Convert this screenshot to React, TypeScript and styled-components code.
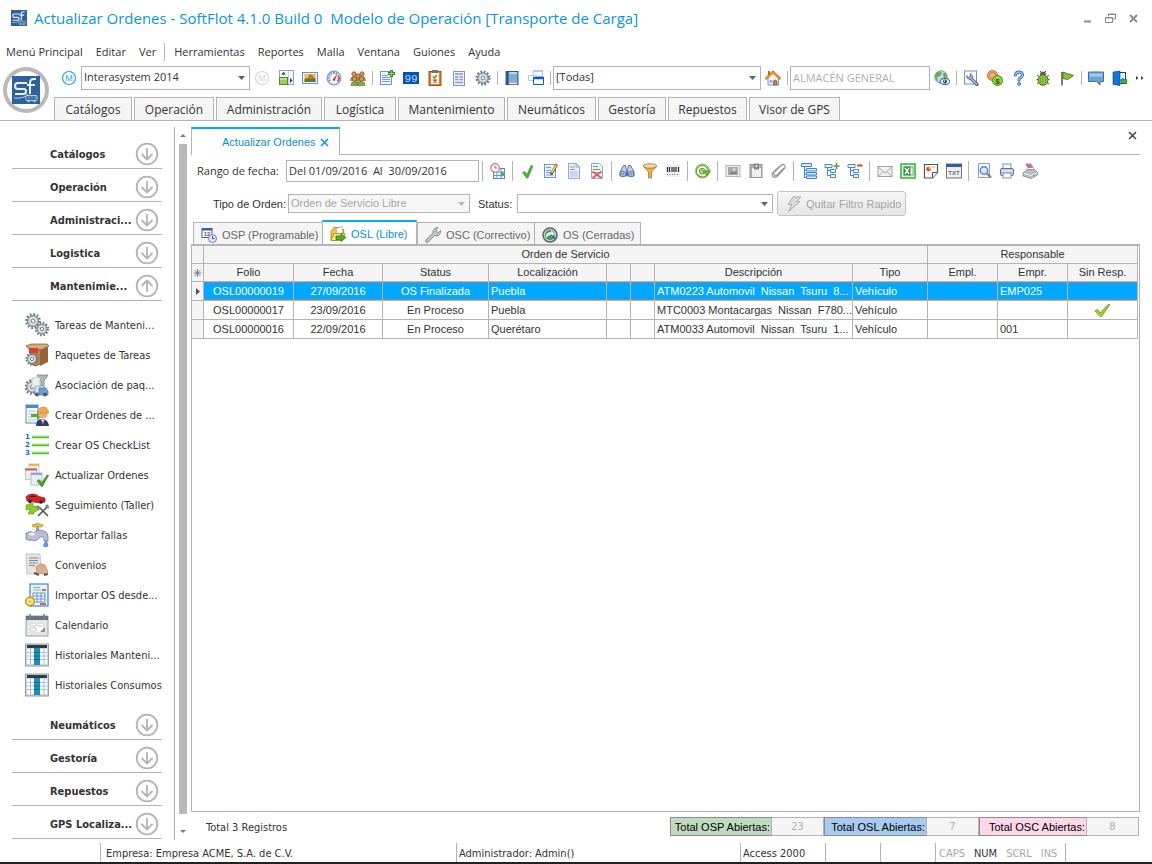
import React from "react";
import styled, { createGlobalStyle, css } from "styled-components";

const line = "#b4b4b4";
const accent = "#00a8ff";
const ink = "#333333";
const uiFont = '"Open Sans", "Segoe UI", sans-serif';
const sideFont = '"DejaVu Sans Condensed", Tahoma, sans-serif';
const gridFont = '"Liberation Sans", Arial, sans-serif';

const GlobalStyle = createGlobalStyle`
  *, *::before, *::after { box-sizing: border-box; }
  body { margin: 0; background: #fff; color: ${ink}; font-family: ${uiFont}; font-size: 11px; line-height: 16px; }
  button, input, select { font: inherit; color: inherit; margin: 0; padding: 0; border: 0; background: none; border-radius: 0; }
  svg { display: block; flex: none; }
`;

/* ---------- icon drawings ---------- */

const Page = ({ x = 3, y = 1, w = 11, h = 14, c = "#6f93cf" }) => (
  <rect x={x + 0.5} y={y + 0.5} width={w - 1} height={h - 1} fill="#eef4fd" stroke={c} />
);
const Gear = ({ cx, cy, r, fill = "#b9c0c4", stroke = "#6d777e" }: { cx: number; cy: number; r: number; fill?: string; stroke?: string }) => (
  <g>
    <circle cx={cx} cy={cy} r={r} fill="none" stroke={stroke} strokeWidth={r * 0.4} strokeDasharray={`${r * 0.26} ${r * 0.2635}`} />
    <circle cx={cx} cy={cy} r={r * 0.84} fill={fill} stroke={stroke} strokeWidth="0.8" />
    <circle cx={cx} cy={cy} r={r * 0.56} fill="#e9edee" />
    <circle cx={cx} cy={cy} r={r * 0.3} fill="#fff" stroke={stroke} strokeWidth="1" />
  </g>
);
const Tree = () => (
  <g fill="none" stroke="#3b87dd">
    <path d="M3.500 4v8.500H6M3.500 7.500H6" />
    <path d="M1 1.500h7v3H1zM6.500 6.500h5v3h-5zM6.500 11.500h5v3h-5z" fill="#fff" />
  </g>
);
const Person = ({ x, y, c }: { x: number; y: number; c: string }) => (
  <g>
    <circle cx={x} cy={y} r="2.200" fill="#d89a5a" stroke="#8a5220" strokeWidth="0.8" />
    <path d={`M${x - 3.5} ${y + 6.5}q0-4 3.500-4t3.500 4z`} fill={c} stroke="#5b4a20" strokeWidth="0.500" />
  </g>
);

const icons: Record<string, React.ReactNode> = {
  model: <g><circle cx="8" cy="8" r="6.500" fill="none" stroke="currentColor" strokeWidth="1.200" /><text x="8" y="11" textAnchor="middle" fontSize="9" fontFamily="Liberation Sans" fill="currentColor">M</text></g>,
  panels: <g><rect x="1.500" y="0.500" width="14" height="14" fill="#fafcff" stroke="#8ba4cd" /><path d="M10.500 1v13" stroke="#c2d0e8" /><path d="M3 4.500L5.500 2 8 4.500zM12 8l2.500 2.500L12 13z" fill="#2d3642" /><rect x="1.500" y="7.500" width="8" height="7" fill="#9bcb62" stroke="#4c8d25" /><path d="M2 9h7" stroke="#dff2c8" /></g>,
  photo: <g><rect x="0.500" y="2.500" width="15" height="11" fill="#e9f2ff" stroke="#6c91c9" /><rect x="2.500" y="4" width="11" height="8" fill="#f0b34c" /><path d="M2.500 12V9l3-1 3 1 2-2 3 2v3z" fill="#56802d" /><circle cx="8.500" cy="7" r="2.500" fill="#c27a24" /><circle cx="5" cy="6" r="1" fill="#fff0a0" /></g>,
  gauge: <g><circle cx="8" cy="8" r="6.800" fill="#eef3fa" stroke="#8aa1c6" strokeWidth="1.400" /><path d="M4 11a5 5 0 0 1 7-7" fill="none" stroke="#5e8fe0" strokeWidth="1.800" strokeDasharray="1.500 1" /><path d="M12 5.500a5 5 0 0 1-.5 6" fill="none" stroke="#d55" strokeWidth="2" /><path d="M11.500 3.500L8.500 11l-2-1z" fill="#c62626" /></g>,
  people: <g><Person x={8} y={6} c="#a8c468" /><Person x={4} y={4} c="#c9904d" /><Person x={12} y={4} c="#c9904d" /><Person x={4.5} y={9} c="#79b73f" /><Person x={11.5} y={9} c="#79b73f" /></g>,
  listAdd: <g><Page x={1} w={12} /><path d="M3 5.500h6M3 7.500h8M3 9.500h8M3 11.500h8" stroke="#7b9cd0" /><path d="M12.500 0v7M9 3.500h7" stroke="#3f8a1c" strokeWidth="3" /><path d="M12.500 1v5M10 3.500h5" stroke="#9ad35a" /></g>,
  digits: <g><rect y="2" width="16" height="12" fill="#0750c4" /><text x="8" y="11.500" textAnchor="middle" fontSize="11" fontFamily="Liberation Mono" fill="#a9dcff">99</text></g>,
  clipboard: <g><rect x="2" y="1.500" width="12" height="14" fill="#d8862d" stroke="#9a5410" /><rect x="4" y="3" width="8" height="11" fill="#f7f4ee" /><rect x="5" width="6" height="3" fill="#6e7681" /><path d="M6 6.500l1.500 1.500 2.500-3" fill="none" stroke="#3c9a28" strokeWidth="1.300" /><path d="M6.500 9.500l3 3m0-3l-3 3" stroke="#cf2020" strokeWidth="1.300" /></g>,
  form: <g><Page x={2} w={12} y={1} h={15} c="#7e95c8" /><path d="M4 4h8M4 7h3.500M8.500 7H12M4 9.500h3.500M8.500 9.500H12M4 12.500h8" stroke="#8b9bc9" strokeWidth="1.700" /></g>,
  gear: <Gear cx={8} cy={8} r={6.3} fill="#b9c0cd" stroke="#6c7587" />,
  notebook: <g><rect x="2" y="1.500" width="12" height="13" fill="#7fadd6" stroke="#2c5684" /><path d="M3.500 2v12" stroke="#244a75" strokeWidth="2" /><path d="M5.500 3h7.500" stroke="#b5d5f0" strokeWidth="2" /><path d="M5 13.500h8" stroke="#e6f0f8" strokeWidth="1.500" /></g>,
  windows: <g fill="#fff"><path d="M5.500.5h9v6h-9z" stroke="#a9cff6" /><path d="M5 1h10" stroke="#a9cff6" strokeWidth="2" /><path d="M.5 5.500h8v5h-8z" stroke="#a9cff6" /><path d="M5.500 8h10v6.500h-10z" stroke="#0b5dc6" /><path d="M5 8h11" stroke="#0b5dc6" strokeWidth="2.500" /></g>,
  home: <g><path d="M3 7.500L8 3l5.500 4.500v7.500H3z" fill="#f0f4fa" stroke="#7f97bb" /><path d="M0.500 9L8 2l7.500 7" fill="none" stroke="#d97a12" strokeWidth="2.400" /><path d="M1 8.500L8 2l7 6.500" fill="none" stroke="#f8b556" strokeWidth="0.800" /><rect x="3" y="1" width="2" height="4" fill="#c2671a" /><path d="M8.500 15v-4q1.800-2 3.500 0v4z" fill="#c18048" stroke="#7d4315" strokeWidth="0.600" /><rect x="4.500" y="10" width="3" height="3" fill="#91b7e6" /></g>,
  globeEye: <g><circle cx="7" cy="7" r="6.300" fill="#b9d7f0" stroke="#5e86ae" strokeWidth="0.800" /><path d="M2 3q4-3 6 0l-2 3-3 1 1 4-2-1-1-4zM9 3l3 0 1 4-3 1z" fill="#6fae3d" /><ellipse cx="11" cy="11.500" rx="4.800" ry="3" fill="#e6ecf5" stroke="#31507e" /><circle cx="11" cy="11.500" r="2" fill="#2d4b78" /><circle cx="10.500" cy="11" r="0.700" fill="#fff" /></g>,
  wrenchBox: <g><rect x="1.500" y="1" width="12" height="13" fill="#fbfcff" stroke="#7d8bc8" /><path d="M14 14.500L7.500 8" stroke="#4e6690" strokeWidth="3.200" strokeLinecap="round" /><path d="M14 14.500L7.500 8" stroke="#b6c6de" strokeWidth="1.400" /><path d="M3.500 5.500q0 4 4 4 2.500-1 2-4L7 3.500l.5 3-1.500 1z" fill="#a9bcd8" stroke="#4e6690" strokeWidth="0.800" /></g>,
  coins: <g><circle cx="5.500" cy="5.500" r="5" fill="#f4b07a" stroke="#c8692b" /><circle cx="5.500" cy="5.500" r="3.200" fill="none" stroke="#d27a3c" /><circle cx="10.500" cy="10.500" r="5" fill="#9ecb45" stroke="#4c8a1c" /><text x="10.500" y="13.500" textAnchor="middle" fontSize="8" fontWeight="700" fontFamily="Liberation Sans" fill="#28610f">$</text></g>,
  help: <g fill="none" strokeLinecap="round"><path d="M4.500 5q.5-3 3.500-3t3.500 2.700q0 1.800-2 3Q8 8.500 8 10" stroke="#2e62a5" strokeWidth="3" /><path d="M4.500 5q.5-3 3.500-3t3.500 2.700q0 1.800-2 3Q8 8.500 8 10" stroke="#8fc0ec" strokeWidth="1.500" /><circle cx="8" cy="13.800" r="1.500" fill="#8fc0ec" stroke="#2e62a5" strokeWidth="0.800" /></g>,
  bug: <g><path d="M2 5l3 2M14 5l-3 2M1.500 9.500H4M14.500 9.500H12M2 14l3-2M14 14l-3-2M5 1l2 2M11 1L9 3" stroke="#4f5943" /><ellipse cx="8" cy="4" rx="3" ry="2.500" fill="#55606e" /><ellipse cx="8" cy="10" rx="5" ry="5.300" fill="#8dc63f" stroke="#44751a" /><path d="M8 5v10M10.500 7v6M5.500 7v6" stroke="#6f9a35" strokeWidth="0.800" /></g>,
  flag: <g><path d="M3 2v13.500" stroke="#55624d" strokeWidth="1.600" /><path d="M4 2l4 1.500 6.500 2-6 4L4 8.500z" fill="#8fc140" stroke="#4b821d" /></g>,
  speech: <g><path d="M0.500 2h15v9.500h-3.500v3.500l-3.500-3.500h-8z" fill="#6da3d9" stroke="#3a6ea9" /><path d="M1.500 3.500h13v3h-13z" fill="#a9cdf0" /></g>,
  exit: <g><rect x="6" y="2.500" width="7.500" height="11" fill="#e8f5ff" stroke="#3a4350" /><path d="M1 2l7-1v14.500l-7-1z" fill="#1475d6" stroke="#0a3e7d" strokeWidth="0.600" /><path d="M8 10.500l3-2.500v1.500h3.500v4H11V14z" fill="#3fae3c" stroke="#176d1d" strokeWidth="0.700" /></g>,
  overflow: <path d="M4 6l2.500 2L4 10zM9 6l2.500 2L9 10z" fill="#3c3c3c" />,

  calendarClock: <g><rect x="3.500" y="5.500" width="11" height="10" fill="#fff" stroke="#4a86cc" /><path d="M3 9h12M3 12.500h12M7 5v11M11 5v11" stroke="#5b9bdf" /><path d="M11 8l4 3-4 3z" fill="#52b33e" /><circle cx="5" cy="5" r="4.300" fill="#fdf2f2" stroke="#df7777" strokeWidth="1.200" /><path d="M5 2.500V5h2" fill="none" stroke="#7085a8" /></g>,
  check: <path d="M2.500 9.500L5 8.500l2 3 4-9 2 .5L8 15H6.500z" fill="#3fbb2f" stroke="#2c9a22" strokeWidth="0.600" />,
  edit: <g><Page x={1} w={12} y={1} h={14} /><path d="M3 4.500h5M3 7.500h5M3 9.500h7M3 12h7" stroke="#6aa5b8" /><path d="M13.500 2L8 11.500" stroke="#404040" strokeWidth="2.600" /><path d="M13.500 2L8.500 10" stroke="#f6d94c" strokeWidth="1.600" /><path d="M12.500 1l2 1.500" stroke="#d04b4b" strokeWidth="1.500" /></g>,
  doc: <g><path d="M2.500.5h8l3 3v12h-11z" fill="#edf3fc" stroke="#8aa8d8" /><path d="M10 1v3h3" fill="#cfe0f7" stroke="#8aa8d8" /><path d="M4 4h5" stroke="#6fb46c" /><path d="M4 6.500h5" stroke="#d96f6f" /><path d="M4 9h8M4 11h8M4 13h8" stroke="#9fb9e3" /></g>,
  docDelete: <g><path d="M2.500.5h8l3 3v12h-11z" fill="#edf3fc" stroke="#8aa8d8" /><path d="M4 3.500h5M4 6.500h7" stroke="#62a35c" /><path d="M3 9.500h10" stroke="#7fa1d6" /><path d="M3.500 8.500l9 6.500m0-6.500l-9 6.500" stroke="#dd5c55" strokeWidth="1.700" /></g>,
  binoculars: <g fill="#c6d3ea" stroke="#5672a8"><path d="M4.500 2.500h2l1 5v5.500H1V9z" /><path d="M9.500 2.500h2L15 9v4H8.500V7.500z" /><circle cx="3.800" cy="11" r="2.800" /><circle cx="12.200" cy="11" r="2.800" /><circle cx="3.800" cy="11" r="1" fill="#fff" /><circle cx="12.200" cy="11" r="1" fill="#fff" /></g>,
  funnel: <g><path d="M1.500 3.500l5 5.500v6h3V9l5-5.500z" fill="#e8b064" stroke="#b87a30" strokeWidth="0.900" /><ellipse cx="8" cy="3" rx="6.700" ry="2.200" fill="#f9dba8" stroke="#b87420" strokeWidth="0.900" /></g>,
  barcode: <g><rect x="1" y="2" width="14" height="12" fill="#f0f0f0" /><path d="M2.500 4v5M4.500 4v5M7 4v5M9 4v5M11 4v5M13.500 4v5" stroke="#2d2d2d" strokeWidth="1.200" /><path d="M2 11.500h12" stroke="#777" strokeDasharray="1 1.500" /></g>,
  refresh: <g><circle cx="7.500" cy="8" r="7" fill="#b5d98c" stroke="#8ab85e" /><path d="M10.500 11a4.300 4.300 0 1 1 .8-4" fill="none" stroke="#5e9b33" strokeWidth="4" /><path d="M10.500 11a4.300 4.300 0 1 1 .8-4" fill="none" stroke="#f4faed" strokeWidth="2" /><path d="M7.500 8h8l-3.500 4.500z" fill="#7dbb45" stroke="#4c8a24" strokeWidth="0.700" /></g>,
  photoOff: <g><rect x="1" y="2.500" width="14" height="11" fill="#ececec" stroke="#b5b5b5" /><rect x="3" y="4" width="10" height="8" fill="#a9a9a9" /><path d="M4 11l3-3 2 2 2-2 1 3z" fill="#808080" /><circle cx="9" cy="6.500" r="1.800" fill="#d0d0d0" /></g>,
  pasteOff: <g><rect x="2" y="1.500" width="12" height="13" fill="#b1b1b1" stroke="#959595" /><rect x="4" y="5" width="9" height="9" fill="#f0f0f0" /><rect x="6" y="0.500" width="5" height="6" fill="#878787" /><circle cx="8.500" cy="3" r="1.200" fill="#ddd" /></g>,
  clip: <path d="M12.500 5.500L6 12q-2 1.500-3-.5T4 8.500l6.500-6.500q1.800-1.200 3 .2t.2 3L7 12.500q-3 3-5 1t.5-4.500L9 3" fill="none" stroke="#969696" strokeWidth="1.200" />,
  tree: <g fill="none" stroke="#3b87dd"><path d="M3.500 3v11.500H6M3.500 7.500H6M3.500 11H6" /><path d="M.5.500h10v3H.500zM5.500 5.500h10v2.500h-10zM5.500 9.500h10v2.500h-10zM5.500 13h10v2.500h-10z" fill="#dbeaff" /></g>,
  treeAdd: <g><Tree /><path d="M12.500 0v6M9.500 3h6" stroke="#48a335" strokeWidth="1.500" /></g>,
  treeSub: <g><Tree /><path d="M10 2.500h5.500" stroke="#d34a35" strokeWidth="2" /></g>,
  mail: <g fill="#f2f2f2" stroke="#a2a2a2"><rect x="1" y="3.500" width="14" height="10" /><path d="M1 4l7 6 7-6M1 13.500l5-5M15 13.500l-5-5" fill="none" /></g>,
  excel: <g><rect x="1" y="1" width="14" height="14" fill="#d5f2d4" stroke="#52bf55" strokeWidth="1.800" /><path d="M9 4h4v8H9" fill="#fff" stroke="#65bb60" /><rect x="3.500" y="3.500" width="7" height="9" fill="#2a8a40" /><path d="M5 5l4 6m0-6l-4 6" stroke="#fff" strokeWidth="1.500" /></g>,
  report: <g><path d="M1.500 1.500h13v8l-5 5.500h-8z" fill="#fff" stroke="#555" strokeWidth="1.200" /><path d="M9.500 15V9.500h5" fill="#eee" stroke="#555" /><circle cx="5.500" cy="6" r="2.300" fill="#e54330" /><path d="M5.500 6V3.700a2.300 2.300 0 0 1 2 3.500z" fill="#f3b42a" /><path d="M9 4h3" stroke="#8bc34a" /></g>,
  txt: <g><rect x="0.500" y="1" width="15" height="14" fill="#f0f0f0" stroke="#747474" /><path d="M0 2.500h16" stroke="#2a62b0" strokeWidth="3" /><text x="8" y="12" textAnchor="middle" fontSize="6" fontWeight="700" fontFamily="Liberation Sans" fill="#707070">TXT</text></g>,
  preview: <g><path d="M2.500.5h11v14h-11z" fill="#f4f9ff" stroke="#7aa2df" /><circle cx="8" cy="7.500" r="3.700" fill="#d7ebff" stroke="#4a86c9" strokeWidth="1.400" /><path d="M11 10.500l4 4" stroke="#b07c45" strokeWidth="2.400" /></g>,
  print: <g><rect x="4" y="1" width="8" height="5" fill="#fff" stroke="#7b8fc0" /><rect x="1.500" y="5.500" width="13" height="7" rx="1" fill="#b8c6e8" stroke="#5d72ab" /><path d="M3 8h10" stroke="#e9effb" strokeWidth="1.500" /><rect x="4" y="10" width="8" height="5" fill="#fff" stroke="#7b8fc0" /></g>,
  printRed: <g><path d="M3.500 0.500l6 .5 3 6-6 .5z" fill="#fff" stroke="#aaa" strokeWidth="0.700" /><path d="M4 1h5l1.500 3H5z" fill="#f25a88" /><path d="M6 4.500h5" stroke="#5d8fe0" /><path d="M1 10l4-3.500h7l3.500 3v2.500L9 15.500 1 13z" fill="#bdbdbd" stroke="#868686" strokeWidth="0.800" /><path d="M2 10.500l7 2 6-2.500" fill="none" stroke="#eee" /><circle cx="12" cy="12.500" r="0.800" fill="#36a13c" /></g>,
  bolt: <path d="M7 1h8l-4.500 4.500H14L2.500 15.500l3.500-7H2z" fill="#d9d9d9" stroke="#ababab" />,
  dateClock: <g><rect x="1" y="1.500" width="10" height="9" fill="#fff" stroke="#2d65ad" /><path d="M1 2.500h10" stroke="#2d65ad" strokeWidth="2" /><text x="6" y="9" textAnchor="middle" fontSize="6" fontWeight="700" fontFamily="Liberation Sans" fill="#c93030">12</text><circle cx="11.500" cy="11.500" r="4" fill="#dfe6fa" stroke="#6c7fc3" /><path d="M11.500 9v2.500h2" fill="none" stroke="#3b4c84" /></g>,
  folder: <g><path d="M1 5.500l3-4h5l1 2h4l-2 11H1z" fill="#f2c64a" stroke="#b38922" strokeWidth="0.900" /><path d="M6 2.500l6-2 1 6-6 2z" fill="#fff" stroke="#999" strokeWidth="0.600" /><path d="M1 14.500l3-7h11l-3 7z" fill="#fae384" stroke="#b38922" strokeWidth="0.900" /><path d="M6 10h5V8l5 3.500-5 4v-2H6z" fill="#4eb32c" stroke="#21780e" strokeWidth="0.700" /></g>,
  wrench: <g><path d="M2 14L9.500 6.500" stroke="#808080" strokeWidth="3.600" strokeLinecap="round" /><path d="M8 5q0-4 5-4.500L11 3l.5 2 2 .5 2-2q.5 4.500-4 5.500-3 0-3.500-4z" fill="#c6c6c6" stroke="#808080" strokeWidth="0.900" /><path d="M2 14L10 6" stroke="#cfcfcf" strokeWidth="1.800" strokeLinecap="round" /></g>,
  restore: <g><circle cx="8" cy="8" r="7" fill="#c8ccd2" stroke="#5f666e" strokeWidth="1.600" /><circle cx="8" cy="8" r="5" fill="#3a9a4e" /><path d="M4 11q-1-6 5-6V3l4 4-4 3.500V8q-3 0-5 3z" fill="#e5f5e3" /><path d="M9 8l4 4" stroke="#2c5da5" strokeWidth="1.500" /></g>,
  accept: <path d="M1 9l2.500-1.500L6.500 11 14 2.500h2L7.500 14.500H6z" fill="#9fce35" stroke="#6f9f1c" strokeWidth="0.900" />,
};

const sideIcons: Record<string, React.ReactNode> = {
  gears: <g><Gear cx={8} cy={8} r={6.6} /><Gear cx={17} cy={16} r={6} /></g>,
  box: <g><path d="M5 6l17-3v15l-11 5-6-2z" fill="#b78450" stroke="#7b522a" strokeWidth="0.700" /><path d="M15 7l8-3v15l-8 4z" fill="#956437" /><path d="M1 3l5-2 16 0 2 2-8 4L4 6z" fill="#d7a878" stroke="#7b522a" strokeWidth="0.700" /><path d="M4 5h9v5H4z" fill="#d5402c" /><Gear cx={7} cy={16} r={5.5} /></g>,
  funnelTruck: <g><Gear cx={7} cy={14} r={6.5} /><path d="M12 2h11l-4 6v6h-3V8z" fill="#b0b8be" stroke="#6d767d" strokeWidth="0.700" /><path d="M7 5l8-1v11H7z" fill="#eef1f3" stroke="#aaa" strokeWidth="0.600" /><path d="M10 13h9v8h-9z" fill="#d8e5f2" stroke="#8297b0" strokeWidth="0.700" /><path d="M14 15h7l2 3v4h-9z" fill="#6da0d6" stroke="#4a79aa" strokeWidth="0.700" /><circle cx="12" cy="21.500" r="2" fill="#555" /><circle cx="20" cy="21.500" r="2" fill="#555" /></g>,
  worker: <g><rect x="1" y="2" width="12" height="18" fill="#f2f7fc" stroke="#5d8ebc" /><path d="M1 3.500h12" stroke="#4d8cc9" strokeWidth="3" /><path d="M3 8h8M3 11h8M3 14h8M3 17h8" stroke="#b7c7d7" /><path d="M6 11h6V8l5 5-5 4v-3H6z" fill="#56ad35" /><circle cx="18" cy="11" r="4.500" fill="#e6b182" /><path d="M12.500 10q1-6 5.500-6t5.500 5l.5 1z" fill="#f4a93c" stroke="#c97d20" strokeWidth="0.600" /><path d="M11 23q0-7 6-7t7 7z" fill="#2c3e63" /><path d="M16 16.500l2 5 1.500-5z" fill="#fff" /><path d="M18 17.500v4" stroke="#c33" /></g>,
  numbers: <g><g fontFamily="DejaVu Sans" fontSize="7" fontWeight="700" fill="#1270d8"><text x="0" y="6">1</text><text x="0" y="14">2</text><text x="0" y="22">3</text></g><path d="M7 4h17M7 12h17M7 20h17" stroke="#47c41f" strokeWidth="2.600" /><path d="M7 3.500h17M7 11.500h17M7 19.500h17" stroke="#a3ea7d" strokeWidth="0.800" /></g>,
  docsCheck: <g><rect x="4" y="1" width="10" height="12" fill="#f3f3f3" stroke="#c5c5c5" /><path d="M4 2h10" stroke="#f3b43a" strokeWidth="2" /><rect x="0.500" y="5.500" width="11" height="11" fill="#eee" stroke="#c5c5c5" /><path d="M0 6.500h12" stroke="#ce6060" strokeWidth="2" /><rect x="6" y="10" width="11" height="12" fill="#e9eef5" stroke="#b3bdcc" /><path d="M6 11h11" stroke="#8ea9d3" strokeWidth="2" /><path d="M12 18l2-1.500 3 3L22 12l1.500.5-6 11h-1z" fill="#4aa42e" stroke="#2c7818" strokeWidth="0.600" /></g>,
  carTools: <g><path d="M1 4q2-3 7-3 4 0 6 2.500l6 1.500v4l-5 1L2 8z" fill="#d3232a" stroke="#7d0d12" strokeWidth="0.600" /><path d="M4 4q4-3 8 0z" fill="#4a2026" /><circle cx="5" cy="8.500" r="1.700" fill="#222" /><circle cx="16" cy="9" r="1.700" fill="#222" /><path d="M1 12l7-2v3q4-1 6 4l-5 2v2H3l2-5-4 1z" fill="#8bcb31" stroke="#5b9716" strokeWidth="0.600" /><path d="M13 23l9-9M14 14l9 9" stroke="#555" strokeWidth="1.600" /><path d="M21 12l3 3M12 13l3 3" stroke="#888" strokeWidth="2.500" /></g>,
  faucet: <g><path d="M7 2q5-3 11 0l-1 2H8z" fill="#f2c13c" stroke="#b0800f" strokeWidth="0.600" /><rect x="11" y="3" width="3" height="5" fill="#9aa0b8" /><path d="M1 10q5-3 8 0 4-5 9-2 5 0 5 7v3h-4v-3q-1-2-4-1-3 5-8 3-4 1-6-1z" fill="#b9bed4" stroke="#74799a" strokeWidth="0.800" /><ellipse cx="7" cy="11" rx="3" ry="1.500" fill="#eef0f8" /><path d="M21 18q-5 6 0 6 4-1 0-6z" fill="#5d9be4" stroke="#2f66b2" strokeWidth="0.500" /></g>,
  agreement: <g><path d="M1 1h14l1 19-14 1z" fill="#e6e6e6" stroke="#c3c3c3" /><path d="M4 5h9M4 7.500h9M4 10h9M4 12.500h6" stroke="#888" strokeWidth="1.200" /><path d="M11 14l4-3 5 1 3 7-3 2-8-1z" fill="#dcae8c" stroke="#b58a69" strokeWidth="0.700" /><path d="M9 20l5 2M19 22l4-1" stroke="#555" strokeWidth="2" /></g>,
  invoice: <g><rect x="5" y="1" width="18" height="22" fill="#eaf4ff" stroke="#4b8fd5" strokeWidth="1.300" /><path d="M8 4.500h7M8 7h8" stroke="#80a9db" /><path d="M17 7h4M15 21h6" stroke="#c73434" strokeWidth="1.400" /><path d="M8 10h12v9H8zM8 13h12M8 16h12M12 10v9M16 10v9" fill="#fff" stroke="#5d92cf" /><circle cx="5" cy="18.500" r="4.500" fill="#f6c033" stroke="#c18a10" /><circle cx="5" cy="18.500" r="2.300" fill="none" stroke="#fff2b8" strokeWidth="1.200" /></g>,
  calendar: <g><rect x="1" y="3" width="22" height="20" fill="#e4e6e8" stroke="#9ba1a6" /><rect x="1" y="3" width="22" height="4" fill="#66727c" /><path d="M5 1v5M19 1v5" stroke="#5d8fb3" strokeWidth="1.600" /><rect x="4" y="9" width="16" height="10" fill="#fff" /><path d="M5 10h6v3H5zM13 10h6v3h-6zM5 15h6v3H5z" fill="none" stroke="#c3c8cb" /><path d="M20 14l-5 5h5z" fill="#8a9299" /></g>,
  history: <g><rect x="0.500" y="1" width="23" height="22" fill="#d2d6d9" stroke="#989da1" /><rect x="2" y="2" width="20" height="3" fill="#2f3a44" /><rect x="2" y="6" width="20" height="15" fill="#fff" /><path d="M2 9.500h20M2 13h20M2 16.500h20M5.500 6v15M19 6v15" stroke="#9fc6de" /><rect x="9" y="5" width="6" height="17" fill="#1f8dbb" /><path d="M9 9.500h6M9 13h6M9 16.500h6" stroke="#136a94" /></g>,
};

const Glyph = ({ name, size = 16 }: { name: string; size?: number }) => (
  <svg width={size} height={size} viewBox="0 0 16 16" aria-hidden="true">{icons[name]}</svg>
);

/* ---------- window chrome ---------- */

const Window = styled.div`
  display: flex; flex-direction: column; min-height: 100vh; overflow: hidden;
  border-bottom: 2px solid #222;
`;
const TitleBar = styled.header`
  display: flex; align-items: center; height: 38px; padding: 0 11px 2px 11px; gap: 7px;
`;
const Title = styled.h1`
  margin: 0; flex: 1; font-size: 15px; line-height: 20px; font-weight: 400; color: #0a96e0; white-space: pre;
`;
const CaptionButton = styled.button`
  width: 16px; height: 16px; display: grid; place-items: center; color: #8a8a8a;
`;
const MenuBar = styled.nav`
  display: flex; align-items: center; height: 28px; padding-left: 6px; gap: 13px;
`;
const MenuItem = styled.button<{ $divided?: boolean }>`
  height: 18px; white-space: nowrap;
  ${(p) => p.$divided && css`border-left: 1px solid ${line}; padding-left: 9px; margin-left: -5px;`}
`;
const Ribbon = styled.div`
  display: flex; border-bottom: 1px solid ${line};
`;
const LogoCell = styled.div`flex: none; width: 54px; padding: 1px 0 0 3px;`;
const RibbonRows = styled.div`flex: 1; min-width: 0;`;
const MainTools = styled.div`
  display: flex; align-items: center; height: 24px; padding-left: 3px; margin-bottom: 7px;
`;
const ToolButton = styled.button<{ $w?: number; $tone?: string }>`
  flex: none; display: grid; place-items: center; height: 22px;
  width: ${(p) => p.$w ?? 24}px; color: ${(p) => p.$tone ?? "inherit"};
`;
const Divider = styled.span<{ $w: number; $h: number }>`
  flex: none; width: ${(p) => p.$w}px; height: ${(p) => p.$h}px;
  display: flex; justify-content: center;
  &::before { content: ""; width: 1px; background: ${line}; }
`;
const ModuleTabs = styled.nav`display: flex; gap: 2px; height: 23px;`;
const ModuleTab = styled.button<{ $w: number }>`
  width: ${(p) => p.$w}px; padding-top: 2px; border: 1px solid ${line}; border-bottom: 0; background: #f5f5f5;
  white-space: nowrap; font-size: 12px;
`;

/* ---------- form controls ---------- */

const ComboBox = styled.span<{ $w: number; $h: number; $off?: boolean }>`
  position: relative; flex: none; display: block; width: ${(p) => p.$w}px; height: ${(p) => p.$h}px;
  border: 1px solid ${line}; background: ${(p) => (p.$off ? "#f7f7f7" : "#fff")};
  color: ${(p) => (p.$off ? "#a5a5a5" : "inherit")};
  select { appearance: none; display: block; width: 100%; height: 100%; padding: 0 20px 2px 2px; opacity: 1; }
  svg { position: absolute; right: 4px; top: calc(50% - 2px); pointer-events: none; }
`;
const TextBox = styled.input<{ $w: number; $h: number }>`
  flex: none; width: ${(p) => p.$w}px; height: ${(p) => p.$h}px; border: 1px solid ${line}; background: #fff; padding: 0 2px 2px;
  font-size: 11px;
  &:disabled { color: #b0b0b0; opacity: 1; }
`;
const Combo = ({ label, id, value, w, h, off }: { label?: string; id: string; value: string; w: number; h: number; off?: boolean }) => (
  <ComboBox $w={w} $h={h} $off={off}>
    <select id={id} aria-label={label} disabled={off}><option>{value}</option></select>
    <svg width="7" height="4" viewBox="0 0 7 4" aria-hidden="true"><path d="M0 0h7L3.500 4z" fill={off ? "#b8b8b8" : "#606060"} /></svg>
  </ComboBox>
);

/* ---------- side navigation ---------- */

const Body = styled.div`flex: 1; display: flex; padding-top: 6px; min-height: 0;`;
const Side = styled.nav`
  flex: none; width: 175px; margin-bottom: 3px; padding: 9px 12px 0; border-right: 1px solid ${line};
  font-family: ${sideFont};
`;
const Group = styled.button`
  display: flex; align-items: center; justify-content: space-between; width: 150px; height: 33px;
  padding: 3px 3px 0 38px; border-bottom: 1px solid ${line}; font-weight: 700; text-align: left; white-space: nowrap;
`;
const Items = styled.ul`list-style: none; margin: 0; padding: 9px 0 7px 13px;`;
const Item = styled.button`
  display: flex; align-items: center; gap: 6px; height: 30px; white-space: nowrap;
`;
const NavText = styled.span`padding-top: 2px;`;
const ScrollTrack = styled.div`
  flex: none; width: 16px; margin: 0 0 5px; padding: 6px 4px 4px; display: flex; flex-direction: column; align-items: center;
`;
const Thumb = styled.div`flex: 1; align-self: stretch; margin: 7px 0 16px; background: #b9b9b9;`;

const Arrow = ({ up }: { up?: boolean }) => (
  <svg width="24" height="24" viewBox="0 0 24 24" fill="none" stroke="#b4b4b4" strokeWidth="1.800" aria-hidden="true">
    <circle cx="12" cy="12" r="10.300" />
    <path d={up ? "M12 18V7M6.500 12L12 6.500 17.500 12" : "M12 6v11M6.500 12l5.500 5.500 5.500-5.500"} />
  </svg>
);

/* ---------- document area ---------- */

const Doc = styled.main`flex: 1; min-width: 0; display: flex; flex-direction: column; padding-right: 12px;`;
const DocTabs = styled.div`display: flex; justify-content: space-between; height: 28px; padding-right: 2px; border-bottom: 1px solid ${line};`;
const DocTab = styled.div`
  display: flex; align-items: center; gap: 4px; height: 28px; width: 149px; padding: 0 9px 0 30px;
  border: 1px solid ${line}; border-top: 2px solid ${accent}; border-bottom: 0; background: #fff;
  color: #0a8fd8; font-family: ${gridFont}; white-space: nowrap;
`;
const CloseButton = styled.button`display: grid; place-items: center; width: 12px; height: 16px; color: #444;`;
const DateTools = styled.div`
  display: flex; align-items: center; height: 22px; margin-top: 5px; padding-left: 6px;
`;
const RangeLabel = styled.label`width: 89px; white-space: nowrap;`;
const FilterRow = styled.div`
  display: flex; align-items: center; height: 25px; margin-top: 9px; padding-left: 22px; font-family: ${gridFont};
`;
const FilterLabel = styled.label<{ $w: number }>`width: ${(p) => p.$w}px; white-space: nowrap;`;
const StatusLabel = styled(FilterLabel)`margin-left: 8px;`;
const QuickFilter = styled.button`
  display: flex; align-items: center; gap: 4px; width: 129px; height: 25px; margin-left: 4px; padding-left: 8px;
  border: 1px solid #c4c4c4; border-radius: 3px; background: linear-gradient(#f6f6f6, #e6e6e6); color: #a5a5a5; white-space: nowrap;
`;
const StateTabs = styled.div`display: flex; align-items: flex-end; height: 24px; margin-top: 4px; padding-left: 2px; font-family: ${gridFont};`;
const StateTab = styled.button<{ $w: number; $on?: boolean }>`
  display: flex; align-items: center; gap: 5px; width: ${(p) => p.$w}px; height: ${(p) => (p.$on ? 24 : 22)}px; padding: 2px 0 0 7px;
  border: 1px solid ${line}; border-bottom: 0; border-right-width: ${(p) => (p.$on ? 1 : 0)}px; white-space: nowrap;
  background: ${(p) => (p.$on ? "#fff" : "#f5f5f5")}; color: ${(p) => (p.$on ? "#0a8fd8" : "#666")};
  ${(p) => p.$on && css`border-top: 2px solid ${accent};`}
  &:last-child { border-right-width: 1px; }
`;
const GridFrame = styled.section`
  flex: 1; border: 1px solid ${line}; border-top-width: 2px; padding-right: 1px; margin-bottom: 5px; font-family: ${gridFont};
`;
const Grid = styled.table`
  width: 100%; table-layout: fixed; border-collapse: separate; border-spacing: 0;
`;
const Head = styled.th`
  height: 18px; padding: 0; font-weight: 400; line-height: 15px; background: #f5f5f5; text-align: center; white-space: nowrap;
  border-right: 1px solid ${line}; border-bottom: 1px solid ${line};
`;
const Cell = styled.td<{ $center?: boolean }>`
  height: 19px; padding: 0 2px; line-height: 16px; overflow: hidden; white-space: pre;
  text-align: ${(p) => (p.$center ? "center" : "left")};
  border-right: 1px solid ${line}; border-bottom: 1px solid ${line};
  svg { margin: 0 auto; }
`;
const RowMark = styled(Cell)`background: #f5f5f5; padding: 0;`;
const Row = styled.tr<{ $on?: boolean }>`
  ${(p) => p.$on && css`
    color: #fff;
    ${Cell}:not(:first-child) {
      background:
        repeating-linear-gradient(90deg, #e8703a 0 1px, ${accent} 1px 2px) top / 100% 1px no-repeat padding-box,
        repeating-linear-gradient(90deg, #e8703a 0 1px, ${accent} 1px 2px) bottom / 100% 1px no-repeat padding-box,
        ${accent};
    }
  `}
`;
const Totals = styled.div`
  display: flex; height: 19px; margin: 0 1px 7px 0; padding-left: 15px; align-items: stretch;
`;
const Count = styled.span`flex: 1; font-family: ${sideFont}; line-height: 21px;`;
const TotalLabel = styled.label<{ $w: number; $bg: string }>`
  width: ${(p) => p.$w}px; background: ${(p) => p.$bg}; border: 1px solid #8c8c8c; border-right-color: ${line};
  padding-right: 1px; line-height: 18px; text-align: right; color: #000; font-family: ${gridFont}; white-space: nowrap;
`;
const TotalValue = styled.output`
  width: 52px; border: 1px solid ${line}; border-left: 0; background: #f5f5f5; color: #b0b0b0; text-align: center;
  font-family: ${sideFont}; line-height: 17px;
`;

/* ---------- status bar ---------- */

const StatusBar = styled.footer`display: flex; height: 19px; font-family: ${sideFont}; line-height: 21px;`;
const StatusPart = styled.span<{ $w?: number; $first?: boolean }>`
  flex: ${(p) => (p.$w ? "none" : "1")}; width: ${(p) => (p.$w ? p.$w + "px" : "auto")};
  ${(p) => !p.$first && css`border-left: 1px solid ${line};`}
  padding-left: 2px; white-space: pre;
`;
const Company = styled(StatusPart)`padding-left: 5px;`;
const Keys = styled(StatusPart)`display: flex; gap: 9px; padding-left: 3px; color: #a8a8a8; b { font-weight: 400; color: ${ink}; }`;

/* ---------- data ---------- */

const modules: [string, number][] = [
  ["Catálogos", 78], ["Operación", 80], ["Administración", 106], ["Logística", 72], ["Mantenimiento", 107],
  ["Neumáticos", 89], ["Gestoría", 68], ["Repuestos", 79], ["Visor de GPS", 91],
];
const tasks: [string, string][] = [
  ["gears", "Tareas de Manteni..."], ["box", "Paquetes de Tareas"], ["funnelTruck", "Asociación de paq..."],
  ["worker", "Crear Ordenes de ..."], ["numbers", "Crear OS CheckList"], ["docsCheck", "Actualizar Ordenes"],
  ["carTools", "Seguimiento (Taller)"], ["faucet", "Reportar fallas"], ["agreement", "Convenios"],
  ["invoice", "Importar OS desde..."], ["calendar", "Calendario"], ["history", "Historiales Manteni..."],
  ["history", "Historiales Consumos"],
];
const columns = [12, 90, 89, 106, 118, 24, 24, 0, 75, 70, 70, 70];
const headings = ["Folio", "Fecha", "Status", "Localización", "", "", "Descripción", "Tipo", "Empl.", "Empr.", "Sin Resp."];
const orders = [
  ["OSL00000019", "27/09/2016", "OS Finalizada", "Puebla", "ATM0223 Automovil  Nissan  Tsuru  8...", "EMP025"],
  ["OSL00000017", "23/09/2016", "En Proceso", "Puebla", "MTC0003 Montacargas  Nissan  F780...", "check"],
  ["OSL00000016", "22/09/2016", "En Proceso", "Querétaro", "ATM0033 Automovil  Nissan  Tsuru  1...", "001"],
];
const dateTools: string[][] = [
  ["calendarClock"], ["check", "edit", "doc", "docDelete"], ["binoculars", "funnel", "barcode"], ["refresh"],
  ["photoOff", "pasteOff", "clip"], ["tree", "treeAdd", "treeSub"], ["mail", "excel", "report", "txt"],
  ["preview", "print", "printRed"],
];

const Tools = ({ names, w = 24 }: { names: string[]; w?: number }) => (
  <>{names.map((n) => <ToolButton key={n} $w={w} aria-label={n}><Glyph name={n} /></ToolButton>)}</>
);

/* The brand mark: a ribbon-like monogram above a small bus. */
const Mark = () => (
  <g>
    <rect width="28" height="28" fill="#2f629b" />
    <path d="M15 7H6q-3 0-3 3t3 3h6q2 0 2 2.500T11 18H3M24 3h-2q-4 0-4 4v11M15 9h8" fill="none" stroke="#eaf1f8" strokeWidth="2" />
    <path d="M2 22q10 1 14-4" fill="none" stroke="#c6d8ea" />
    <rect x="14" y="19.500" width="11" height="5" rx="1" fill="none" stroke="#b9d0e8" />
    <path d="M17 20v3M20 20v3M23 20v3" stroke="#b9d0e8" strokeWidth="0.700" />
    <circle cx="16.500" cy="25" r="1.200" fill="#b9d0e8" /><circle cx="22.500" cy="25" r="1.200" fill="#b9d0e8" />
  </g>
);

const Logo = () => (
  <svg width="46" height="46" viewBox="0 0 46 46" aria-label="SoftFlot">
    <circle cx="23" cy="23" r="21" fill="#fff" stroke="#b9b9b9" strokeWidth="4" />
    <g transform="translate(9 9)"><Mark /></g>
  </svg>
);

const Groups = ({ names, open }: { names: string[]; open?: string }) => (
  <>{names.map((n) => <Group key={n} aria-expanded={n === open}><NavText>{n}</NavText><Arrow up={n === open} /></Group>)}</>
);

export default function App() {
  return (
    <Window>
      <GlobalStyle />
      <TitleBar>
        <svg width="16" height="16" viewBox="0 0 28 28" aria-hidden="true"><Mark /></svg>
        <Title>Actualizar Ordenes - SoftFlot 4.1.0 Build 0  Modelo de Operación [Transporte de Carga]</Title>
        <CaptionButton aria-label="Minimizar"><svg width="11" height="11"><path d="M2 8.500h7" stroke="currentColor" strokeWidth="2" /></svg></CaptionButton>
        <CaptionButton aria-label="Restaurar"><svg width="11" height="11" fill="none" stroke="currentColor"><path d="M3.500 3.500V1h7v5H7.500M3 1.500h8" /><path d="M.5 4.500h7v5h-7zM0 5h8" /></svg></CaptionButton>
        <CaptionButton aria-label="Cerrar"><svg width="11" height="11"><path d="M2 2l7 7m0-7L2 9" stroke="currentColor" strokeWidth="1.800" /></svg></CaptionButton>
      </TitleBar>
      <MenuBar>
        {["Menú Principal", "Editar", "Ver", "Herramientas", "Reportes", "Malla", "Ventana", "Guiones", "Ayuda"].map((m) => (
          <MenuItem key={m} $divided={m === "Herramientas"}>{m}</MenuItem>
        ))}
      </MenuBar>
      <Ribbon>
        <LogoCell><Logo /></LogoCell>
        <RibbonRows>
          <MainTools>
            <ToolButton $tone="#16a6ee" aria-label="Modelo"><Glyph name="model" /></ToolButton>
            <Combo id="company" label="Empresa" value="Interasystem 2014" w={169} h={24} />
            <ToolButton $tone="#d5d5d5" aria-label="Modelo inactivo"><Glyph name="model" /></ToolButton>
            <Tools names={["panels", "photo", "gauge", "people"]} />
            <Divider $w={5} $h={14} />
            <Tools names={["listAdd", "digits", "clipboard", "form", "gear"]} />
            <Divider $w={5} $h={14} />
            <Tools names={["notebook", "windows"]} />
            <Divider $w={5} $h={14} />
            <Combo id="scope" label="Sucursal" value="[Todas]" w={208} h={24} />
            <Tools names={["home"]} />
            <Divider $w={5} $h={14} />
            <TextBox $w={140} $h={24} aria-label="Almacén" disabled defaultValue="ALMACÉN GENERAL" />
            <Tools names={["globeEye"]} />
            <Divider $w={5} $h={14} />
            <Tools names={["wrenchBox", "coins", "help", "bug", "flag"]} />
            <Divider $w={5} $h={14} />
            <Tools names={["speech", "exit"]} />
            <Tools names={["overflow"]} w={12} />
          </MainTools>
          <ModuleTabs>
            {modules.map(([n, w]) => <ModuleTab key={n} $w={w}>{n}</ModuleTab>)}
          </ModuleTabs>
        </RibbonRows>
      </Ribbon>

      <Body>
        <Side>
          <Groups names={["Catálogos", "Operación", "Administraci...", "Logistica", "Mantenimie..."]} open="Mantenimie..." />
          <Items>
            {tasks.map(([icon, name]) => (
              <li key={name}>
                <Item>
                  <svg width="24" height="24" viewBox="0 0 24 24" aria-hidden="true">{sideIcons[icon]}</svg>
                  <NavText>{name}</NavText>
                </Item>
              </li>
            ))}
          </Items>
          <Groups names={["Neumáticos", "Gestoría", "Repuestos", "GPS Localiza..."]} />
        </Side>
        <ScrollTrack>
          <svg width="6" height="4"><path d="M0 4h6L3 1z" fill="#777" /></svg>
          <Thumb />
          <svg width="6" height="4"><path d="M0 0h6L3 3z" fill="#777" /></svg>
        </ScrollTrack>
        <Doc>
          <DocTabs>
            <DocTab>
              Actualizar Ordenes
              <CloseButton aria-label="Cerrar pestaña"><svg width="9" height="9"><path d="M1 1l7 7m0-7L1 8" stroke="#0a96e0" strokeWidth="1.500" /></svg></CloseButton>
            </DocTab>
            <CloseButton aria-label="Cerrar documento"><svg width="9" height="9"><path d="M1 1l7 7m0-7L1 8" stroke="#444" strokeWidth="1.500" /></svg></CloseButton>
          </DocTabs>
          <DateTools>
            <RangeLabel htmlFor="range">Rango de fecha:</RangeLabel>
            <TextBox id="range" $w={193} $h={22} defaultValue="Del 01/09/2016  Al  30/09/2016" />
            {dateTools.map((set) => (
              <React.Fragment key={set[0]}><Divider $w={7} $h={20} /><Tools names={set} w={23} /></React.Fragment>
            ))}
          </DateTools>
          <FilterRow>
            <FilterLabel $w={75} htmlFor="kind">Tipo de Orden:</FilterLabel>
            <Combo id="kind" value="Orden de Servicio Libre" w={182} h={19} off />
            <StatusLabel $w={39} htmlFor="status">Status:</StatusLabel>
            <Combo id="status" value="" w={256} h={19} />
            <QuickFilter disabled><Glyph name="bolt" />Quitar Filtro Rapido</QuickFilter>
          </FilterRow>
          <StateTabs>
            <StateTab $w={129}><Glyph name="dateClock" />OSP (Programable)</StateTab>
            <StateTab $w={95} $on><Glyph name="folder" />OSL (Libre)</StateTab>
            <StateTab $w={117}><Glyph name="wrench" />OSC (Correctivo)</StateTab>
            <StateTab $w={107}><Glyph name="restore" />OS (Cerradas)</StateTab>
          </StateTabs>
          <GridFrame>
            <Grid>
              <colgroup>{columns.map((w, i) => <col key={i} width={w || undefined} />)}</colgroup>
              <thead>
                <tr><Head /><Head colSpan={8}>Orden de Servicio</Head><Head colSpan={3}>Responsable</Head></tr>
                <tr>
                  <Head><svg width="11" height="8" viewBox="0 0 11 8"><path d="M5.500 0v8M1.500 4h8M2.500 1l6 6m0-6l-6 6" stroke="#666" strokeWidth="0.800" /></svg></Head>
                  {headings.map((h, i) => <Head key={i}>{h}</Head>)}
                </tr>
              </thead>
              <tbody>
                {orders.map(([folio, date, status, place, text, owner], i) => (
                  <Row key={folio} $on={i === 0}>
                    <RowMark>{i === 0 && <svg width="4" height="7"><path d="M0 0l4 3.500L0 7z" fill="#555" /></svg>}</RowMark>
                    <Cell $center>{folio}</Cell>
                    <Cell $center>{date}</Cell>
                    <Cell $center>{status}</Cell>
                    <Cell>{place}</Cell>
                    <Cell />
                    <Cell />
                    <Cell>{text}</Cell>
                    <Cell>Vehículo</Cell>
                    <Cell />
                    <Cell>{owner === "check" ? "" : owner}</Cell>
                    <Cell $center>{owner === "check" && <Glyph name="accept" />}</Cell>
                  </Row>
                ))}
              </tbody>
            </Grid>
          </GridFrame>
          <Totals>
            <Count>Total 3 Registros</Count>
            <TotalLabel $w={102} $bg="#c0dcc0" htmlFor="osp">Total OSP Abiertas:</TotalLabel><TotalValue id="osp">23</TotalValue>
            <TotalLabel $w={103} $bg="#a6caf0" htmlFor="osl">Total OSL Abiertas:</TotalLabel><TotalValue id="osl">7</TotalValue>
            <TotalLabel $w={108} $bg="#ffd7eb" htmlFor="osc">Total OSC Abiertas:</TotalLabel><TotalValue id="osc">8</TotalValue>
          </Totals>
        </Doc>
      </Body>
      <StatusBar>
        <StatusPart $w={100} $first />
        <Company>Empresa: Empresa ACME, S.A. de C.V.</Company>
        <StatusPart $w={284}>Administrador: Admin()</StatusPart>
        <StatusPart $w={85}>Access 2000</StatusPart>
        <StatusPart $w={55} />
        <StatusPart $w={55} />
        <Keys $w={130}><span>CAPS</span><b>NUM</b><span>SCRL</span><span>INS</span></Keys>
        <StatusPart $w={87} />
      </StatusBar>
    </Window>
  );
}
